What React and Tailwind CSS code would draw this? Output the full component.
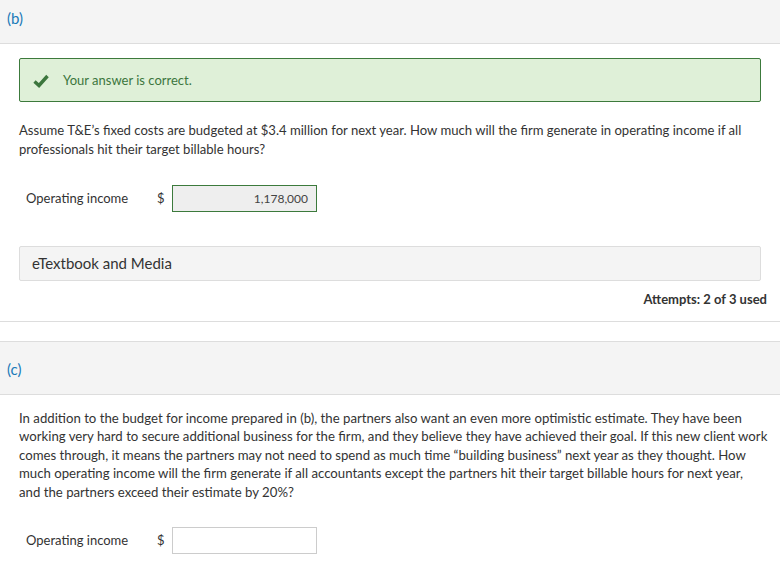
import React from 'react'

function AnswerRow({ value, correct }) {
    return (
        <div className="flex items-center pl-[26px]">
            <span className="w-[131px] text-[13px] text-[#333]">Operating income</span>
            <span className="w-[15px] text-[13px] text-[#333]">$</span>
            <div className={`w-[145px] h-[27px] flex items-center justify-end pr-[8px] text-[12px] text-[#444] border ${correct ? 'bg-[#eeeeee] border-[#3c7a3c]' : 'bg-white border-[#ccc]'}`}>
                {value}
            </div>
        </div>
    )
}

export default function App() {
    return (
        <div className="w-[780px] h-[583px] overflow-hidden bg-white text-[#333]" style={{ fontFamily: 'Lato, "Open Sans", sans-serif' }}>
            <div className="h-[44px] bg-[#f4f4f4] border-b border-[#dddddd] px-[7px] pt-[7px] text-[15px] text-[#1a7ab8]">(b)</div>

            <div className="mx-[19px] mt-[14px] h-[44px] flex items-center rounded-[2px] border border-[#3c7a3c] bg-[#dff0d8]">
                <svg width="16" height="14" viewBox="0 0 16 14" className="ml-[13px] mt-[1px]">
                    <path d="M1.5 7.5 L6 11.5 L14.5 2" fill="none" stroke="#3c763d" strokeWidth="3.4" strokeLinecap="butt" />
                </svg>
                <span className="ml-[14px] mt-[1px] text-[13px] text-[#3c763d]">Your answer is correct.</span>
            </div>

            <p className="mx-[19px] mt-[19px] text-[13.1px] leading-[19px]">
                Assume T&amp;E’s fixed costs are budgeted at $3.4 million for next year. How much will the firm generate in operating income if all professionals hit their target billable hours?
            </p>

            <div className="mt-[26px]">
                <AnswerRow value="1,178,000" correct />
            </div>

            <div className="mx-[19px] mt-[34px] h-[35px] flex items-center px-[12px] bg-[#f4f4f4] border border-[#dddddd] rounded-[2px] text-[15px] text-[#333]">
                eTextbook and Media
            </div>

            <div className="mx-[13px] mt-[9px] text-right text-[13px] font-bold text-[#333]">Attempts: 2 of 3 used</div>

            <div className="mt-[11px] border-t border-[#dddddd] h-[20px]"></div>

            <div className="h-[54px] bg-[#f4f4f4] border-t border-b border-[#dddddd] px-[7px] pt-[16px] text-[15px] text-[#1a7ab8]">(c)</div>

            <p className="ml-[19px] mr-[6px] mt-[14px] text-[13.2px] leading-[18.6px]">
                In addition to the budget for income prepared in (b), the partners also want an even more optimistic estimate. They have been working very hard to secure additional business for the firm, and they believe they have achieved their goal. If this new client work comes through, it means the partners may not need to spend as much time “building business” next year as they thought. How much operating income will the firm generate if all accountants except the partners hit their target billable hours for next year, and{'\u00a0'}the partners exceed their estimate by 20%?
            </p>

            <div className="mt-[26px]">
                <AnswerRow value="" />
            </div>
        </div>
    )
}
